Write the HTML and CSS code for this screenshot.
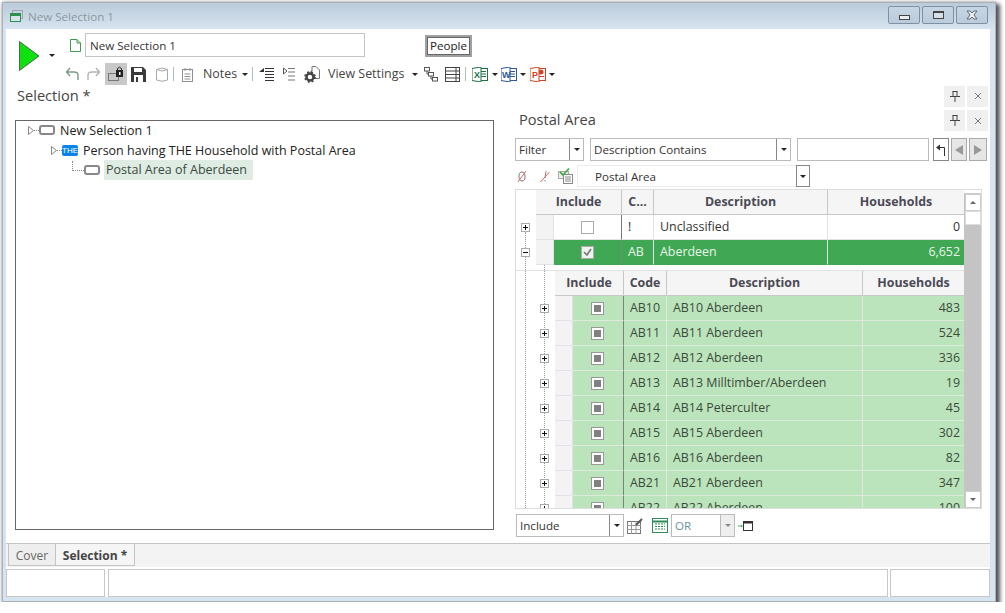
FILE: index.html
```html
<!DOCTYPE html>
<html lang="en">
<head>
    <meta charset="UTF-8">
    <title>New Selection 1</title>
    <link rel="stylesheet" href="styles.css">
</head>
<body>
    <div class="ventana">
        <div class="titulo">
            <svg class="titulo-icono" width="13" height="12" viewBox="0 0 13 12"><rect x="2.5" y="0.5" width="10" height="8" fill="none" stroke="#9aa5ad"/><rect x="0.5" y="3.5" width="10" height="8" fill="#d6e4ea" stroke="#2f8f4e"/><rect x="1" y="4" width="9" height="2" fill="#2f8f4e"/></svg>
            <span class="titulo-texto">New Selection 1</span>
            <div class="ventana-botones">
                <button class="vbtn"><i class="v-min"></i></button>
                <button class="vbtn"><i class="v-max"></i></button>
                <button class="vbtn"><svg width="14" height="10" viewBox="0 0 14 10"><path d="M2 1 L5 1 L7 3 L9 1 L12 1 L9 5 L12 9 L9 9 L7 7 L5 9 L2 9 L5 5 Z" fill="#e8eef4" stroke="#5c6670"/></svg></button>
            </div>
        </div>
        <div class="cliente">
            <div class="superior">
                <svg class="play" width="21" height="30" viewBox="0 0 21 30"><path d="M0.5 0.5 L20 15 L0.5 29.5 Z" fill="#0fe00f" stroke="#4a6a4a"/></svg>
                <i class="caret play-caret"></i>
                <div class="superior-col">
                    <div class="fila-nombre">
                        <svg width="11" height="13" viewBox="0 0 11 13"><path d="M0.5 0.5 H7 L10.5 4 V12.5 H0.5 Z M7 0.5 V4 H10.5" fill="#fff" stroke="#3f9a4a"/></svg>
                        <input class="nombre" type="text" value="New Selection 1">
                        <span class="people">People</span>
                    </div>
                    <div class="fila-tools">
                        <svg class="t-undo" width="14" height="14" viewBox="0 0 14 14"><path d="M13 13 V8 Q13 5 9 5 H2 M5 1 L1.5 5 L5 9" fill="none" stroke="#7d9a86" stroke-width="1.4"/></svg>
                        <svg class="t-redo" width="14" height="14" viewBox="0 0 14 14"><path d="M1 13 V8 Q1 5 5 5 H12 M9 1 L12.5 5 L9 9" fill="none" stroke="#b4b4b4" stroke-width="1.4"/></svg>
                        <span class="t-lock"><svg width="16" height="16" viewBox="0 0 16 16"><rect x="0.5" y="7.5" width="10" height="7" fill="none" stroke="#777"/><rect x="8" y="4" width="7" height="7" fill="#222"/><path d="M9.5 4 V2.5 Q11.5 0 13.5 2.5 V4" fill="none" stroke="#222"/><rect x="11" y="6" width="1.5" height="3" fill="#fff"/></svg></span>
                        <svg class="t-save" width="15" height="15" viewBox="0 0 15 15"><path d="M0 0 H12 L15 3 V15 H0 Z" fill="#3a3a3a"/><rect x="3" y="1" width="8" height="4" fill="#fff"/><rect x="3" y="8" width="9" height="7" fill="#fff"/><rect x="5" y="10" width="2" height="5" fill="#3a3a3a"/></svg>
                        <svg class="t-cil" width="12" height="15" viewBox="0 0 12 15"><path d="M0.5 2.5 Q6 -0.5 11.5 2.5 V13 Q6 15.5 0.5 13 Z M0.5 2.5 Q6 5.5 11.5 2.5" fill="#fff" stroke="#a8a8a8"/></svg>
                        <i class="sep t-sep1"></i>
                        <svg class="t-nota" width="11" height="15" viewBox="0 0 11 15"><rect x="0.5" y="2.5" width="10" height="12" fill="#fff" stroke="#909090"/><path d="M3 1 V4 M8 1 V4 M2.5 7 H8.5 M2.5 9.5 H8.5 M2.5 12 H8.5" stroke="#909090" fill="none"/></svg>
                        <span class="t-texto t-notes">Notes</span>
                        <i class="caret t-c1"></i>
                        <i class="sep t-sep2"></i>
                        <svg class="t-ind" width="15" height="14" viewBox="0 0 15 14"><path d="M0 5 L5 1 V5 Z" fill="#333"/><path d="M6 1.5 H15 M6 4.5 H15 M6 7.5 H15 M6 10.5 H15 M6 13.5 H15" stroke="#333"/></svg>
                        <svg class="t-ded" width="12" height="14" viewBox="0 0 12 14"><path d="M0.5 1 L4 4 L0.5 7 Z" fill="#fff" stroke="#555"/><path d="M5 1.5 H12 M5 5 H12 M5 9 H12 M5 13 H12" stroke="#777"/></svg>
                        <svg class="t-gear" width="16" height="17" viewBox="0 0 16 17"><path d="M8 0.5 H12 L15.5 4 V12.5 H10 V9 H7 V5 H8 Z" fill="#fff" stroke="#777"/><circle cx="6" cy="11" r="3.5" fill="none" stroke="#444" stroke-width="2.4"/><circle cx="6" cy="11" r="5" fill="none" stroke="#444" stroke-width="1.6" stroke-dasharray="2 2"/></svg>
                        <span class="t-texto t-view">View Settings</span>
                        <i class="caret t-c2"></i>
                        <svg class="t-jer" width="14" height="15" viewBox="0 0 14 15"><rect x="0.5" y="0.5" width="5" height="3.5" fill="#fff" stroke="#555"/><rect x="4.5" y="5.5" width="5" height="3.5" fill="#fff" stroke="#555"/><rect x="8.5" y="10.5" width="5" height="3.5" fill="#fff" stroke="#555"/><path d="M3 4 V7 H4.5 M7 9 V12 H8.5" fill="none" stroke="#555"/></svg>
                        <svg class="t-tab" width="15" height="15" viewBox="0 0 15 15"><rect x="0.5" y="0.5" width="14" height="14" fill="#fff" stroke="#444"/><path d="M0 4 H15 M0 7.5 H15 M0 11 H15 M11 0 V15" stroke="#444"/></svg>
                        <i class="sep t-sep3"></i>
                        <svg class="t-xl" width="16" height="15" viewBox="0 0 16 15"><rect x="6.5" y="1.5" width="9" height="12" fill="#fff" stroke="#1e7145"/><path d="M9 4.5 H14 M9 7 H14 M9 9.5 H14" stroke="#1e7145"/><path d="M0 1.5 L9 0 V15 L0 13.5 Z" fill="#fff" stroke="#1e7145"/><text x="2" y="11" class="ico-letra" fill="#1e7145">X</text></svg>
                        <i class="caret t-c3"></i>
                        <svg class="t-wd" width="16" height="15" viewBox="0 0 16 15"><rect x="6.5" y="1.5" width="9" height="12" fill="#fff" stroke="#2b579a"/><path d="M9 4.5 H14 M9 7 H14 M9 9.5 H14" stroke="#2b579a"/><path d="M0 1.5 L9 0 V15 L0 13.5 Z" fill="#fff" stroke="#2b579a"/><text x="1" y="11" class="ico-letra" fill="#2b579a">W</text></svg>
                        <i class="caret t-c4"></i>
                        <svg class="t-pp" width="16" height="15" viewBox="0 0 16 15"><rect x="6.5" y="1.5" width="9" height="12" fill="#fff" stroke="#d04423"/><circle cx="11" cy="5" r="2.5" fill="#d04423"/><path d="M9 9.5 H14" stroke="#d04423"/><path d="M0 1.5 L9 0 V15 L0 13.5 Z" fill="#fff" stroke="#d04423"/><text x="2" y="11" class="ico-letra" fill="#d04423">P</text></svg>
                        <i class="caret t-c5"></i>
                    </div>
                </div>
            </div>

            <div class="seccion">
                <span class="seccion-titulo">Selection *</span>
                <div class="pines">
                    <span class="pin pin-gris"><svg width="10" height="11" viewBox="0 0 10 11"><path d="M2.5 0.5 H7.5 M3 0.5 V5 M7 0.5 V5 M0 5.5 H10 M5 5.5 V11" stroke="#444" fill="none"/></svg></span>
                    <span class="pin pin-gris"><svg width="8" height="8" viewBox="0 0 8 8"><path d="M1 1 L7 7 M7 1 L1 7" stroke="#777"/></svg></span>
                </div>
            </div>

            <div class="paneles">
                <div class="arbol">
                    <div class="nodo nodo-1">
                        <svg class="flecha" width="6" height="9" viewBox="0 0 6 9"><path d="M0.5 0.5 L5.5 4.5 L0.5 8.5 Z" fill="#fff" stroke="#888"/></svg><i class="guion"></i><i class="caja"></i>
                        <span class="nodo-texto">New Selection 1</span>
                    </div>
                    <div class="nodo nodo-2">
                        <svg class="flecha" width="6" height="9" viewBox="0 0 6 9"><path d="M0.5 0.5 L5.5 4.5 L0.5 8.5 Z" fill="#fff" stroke="#888"/></svg><i class="guion"></i><span class="the">THE</span>
                        <span class="nodo-texto">Person having THE Household with Postal Area</span>
                    </div>
                    <div class="nodo nodo-3">
                        <i class="esquina"></i><i class="caja"></i>
                        <span class="nodo-texto nodo-sel">Postal Area of Aberdeen</span>
                    </div>
                </div>

                <div class="derecha">
                    <div class="derecha-cab">
                        <span class="seccion-titulo">Postal Area</span>
                        <div class="pines">
                            <span class="pin pin-gris"><svg width="10" height="11" viewBox="0 0 10 11"><path d="M2.5 0.5 H7.5 M3 0.5 V5 M7 0.5 V5 M0 5.5 H10 M5 5.5 V11" stroke="#444" fill="none"/></svg></span>
                            <span class="pin"><svg width="8" height="8" viewBox="0 0 8 8"><path d="M1 1 L7 7 M7 1 L1 7" stroke="#777"/></svg></span>
                        </div>
                    </div>

                    <div class="filtros">
                        <div class="combo combo-filter"><span class="combo-texto">Filter</span><span class="drop"><i class="caret"></i></span></div>
                        <div class="combo combo-desc"><span class="combo-texto">Description Contains</span><span class="drop"><i class="caret"></i></span></div>
                        <div class="campo"></div>
                        <span class="nav nav-back"><svg width="10" height="12" viewBox="0 0 10 12"><path d="M0 3.5 L4 0.5 V6.5 Z" fill="#333"/><path d="M3 3.5 H8.5 V12" fill="none" stroke="#333"/></svg></span>
                        <span class="nav nav-gris"><i class="tri-izq"></i></span>
                        <span class="nav nav-gris nav-ult"><i class="tri-der"></i></span>
                    </div>

                    <div class="filtros-2">
                        <svg class="f-cero" width="10" height="13" viewBox="0 0 10 13"><ellipse cx="5" cy="6.5" rx="3" ry="4.5" fill="none" stroke="#777"/><path d="M1 12 L9 1" stroke="#e06060"/></svg>
                        <svg class="f-excl" width="10" height="13" viewBox="0 0 10 13"><path d="M6 1 L5 8 M5 10 V11.5" stroke="#888" fill="none"/><path d="M0.5 12 L9.5 2" stroke="#e06060"/></svg>
                        <svg class="f-lista" width="15" height="16" viewBox="0 0 15 16"><rect x="0.5" y="3.5" width="10" height="7" fill="#eee" stroke="#aaa"/><rect x="5.5" y="6.5" width="9" height="9" fill="#fff" stroke="#888"/><path d="M7 9 H13 M7 11 H13 M7 13 H13" stroke="#888"/><path d="M2 4 L5 7 L11 0.5" fill="none" stroke="#4caf50" stroke-width="1.8"/></svg>
                        <div class="combo combo-area"><span class="combo-texto">Postal Area</span><span class="drop"><i class="caret"></i></span></div>
                    </div>

                    <div class="rejilla">
                        <div class="rejilla-cuerpo">
                            <table class="tabla tabla-padre">
                                <colgroup><col class="c20"><col class="c18"><col class="c68"><col class="c32"><col class="c174"><col class="c137"></colgroup>
                                <tr>
                                    <th class="hueco"></th><th colspan="2">Include</th><th>C...</th><th>Description</th><th>Households</th>
                                </tr>
                                <tr>
                                    <td class="hueco"><i class="mas"></i></td><td class="ind"></td><td class="chk"><i class="check"></i></td><td class="cod">!</td><td>Unclassified</td><td class="num">0</td>
                                </tr>
                                <tr class="fila-activa">
                                    <td class="hueco"><i class="mas menos"></i></td><td class="ind"></td><td class="chk"><i class="check marcado"></i></td><td class="cod">AB</td><td>Aberdeen</td><td class="num">6,652</td>
                                </tr>
                            </table>
                            <table class="tabla tabla-hija">
                                <colgroup><col class="c39"><col class="c18"><col class="c51"><col class="c43"><col class="c196"><col class="c102"></colgroup>
                                <tr>
                                    <th class="hueco"></th><th colspan="2">Include</th><th>Code</th><th>Description</th><th>Households</th>
                                </tr>
                                <tr><td class="hueco"><i class="mas"></i></td><td class="ind"></td><td class="chk"><i class="check medio"></i></td><td class="cod">AB10</td><td>AB10 Aberdeen</td><td class="num">483</td></tr>
                                <tr><td class="hueco"><i class="mas"></i></td><td class="ind"></td><td class="chk"><i class="check medio"></i></td><td class="cod">AB11</td><td>AB11 Aberdeen</td><td class="num">524</td></tr>
                                <tr><td class="hueco"><i class="mas"></i></td><td class="ind"></td><td class="chk"><i class="check medio"></i></td><td class="cod">AB12</td><td>AB12 Aberdeen</td><td class="num">336</td></tr>
                                <tr><td class="hueco"><i class="mas"></i></td><td class="ind"></td><td class="chk"><i class="check medio"></i></td><td class="cod">AB13</td><td>AB13 Milltimber/Aberdeen</td><td class="num">19</td></tr>
                                <tr><td class="hueco"><i class="mas"></i></td><td class="ind"></td><td class="chk"><i class="check medio"></i></td><td class="cod">AB14</td><td>AB14 Peterculter</td><td class="num">45</td></tr>
                                <tr><td class="hueco"><i class="mas"></i></td><td class="ind"></td><td class="chk"><i class="check medio"></i></td><td class="cod">AB15</td><td>AB15 Aberdeen</td><td class="num">302</td></tr>
                                <tr><td class="hueco"><i class="mas"></i></td><td class="ind"></td><td class="chk"><i class="check medio"></i></td><td class="cod">AB16</td><td>AB16 Aberdeen</td><td class="num">82</td></tr>
                                <tr><td class="hueco"><i class="mas"></i></td><td class="ind"></td><td class="chk"><i class="check medio"></i></td><td class="cod">AB21</td><td>AB21 Aberdeen</td><td class="num">347</td></tr>
                                <tr><td class="hueco"><i class="mas"></i></td><td class="ind"></td><td class="chk"><i class="check medio"></i></td><td class="cod">AB22</td><td>AB22 Aberdeen</td><td class="num">100</td></tr>
                            </table>
                        </div>
                        <div class="scroll">
                            <span class="scroll-tope"></span>
                            <span class="scroll-btn"><i class="tri-arr"></i></span>
                            <span class="scroll-thumb"></span>
                            <span class="scroll-pista"></span>
                            <span class="scroll-btn"><i class="tri-abj"></i></span>
                        </div>
                    </div>

                    <div class="pie">
                        <div class="combo combo-include"><span class="combo-texto">Include</span><span class="drop"><i class="caret"></i></span></div>
                        <svg class="p-edit" width="16" height="16" viewBox="0 0 16 16"><rect x="0.5" y="3.5" width="13" height="12" fill="#fff" stroke="#777"/><path d="M0 7.5 H14 M0 11.5 H14 M4.5 3 V16 M9 3 V16" stroke="#999"/><path d="M9 7 L15 1" stroke="#555" stroke-width="2"/></svg>
                        <svg class="p-grid" width="16" height="15" viewBox="0 0 16 15"><rect x="0.5" y="0.5" width="15" height="14" fill="#fff" stroke="#2e8b57"/><path d="M1 3.5 H15" stroke="#2e8b57" stroke-width="2"/><path d="M3 6 H13 M3 8.5 H13 M3 11 H13" stroke="#2e8b57" stroke-dasharray="2 1"/></svg>
                        <div class="combo combo-or"><span class="combo-texto">OR</span><span class="drop drop-off"><i class="caret"></i></span></div>
                        <svg class="p-vent" width="15" height="10" viewBox="0 0 15 10"><path d="M0 5 H3" stroke="#4caf50"/><path d="M3 3.5 L5 5 L3 6.5 Z" fill="#4caf50"/><rect x="5.5" y="0.5" width="9" height="9" fill="#fff" stroke="#333"/><rect x="5" y="0" width="10" height="2.5" fill="#333"/></svg>
                    </div>
                </div>
            </div>

            <div class="pestanas">
                <span class="pestana">Cover</span>
                <span class="pestana pestana-activa">Selection *</span>
            </div>
            <div class="estado">
                <span class="estado-celda e1"></span>
                <span class="estado-celda e2"></span>
                <span class="estado-celda e3"></span>
            </div>
        </div>
    </div>
</body>
</html>
```

FILE: styles.css
```css
* {
    box-sizing: border-box;
}

body {
    margin: 0;
    background: #fff;
    font-family: 'Open Sans', 'Noto Sans', sans-serif;
    font-size: 12px;
    color: #333;
    overflow: hidden;
}

.ventana {
    width: 994px;
    height: 600px;
    margin: 2px 0 0 2px;
    padding: 0 5px 4px 3px;
    background: #d6e4f2;
    border: 1px solid #a9b2ba;
    box-shadow: 3px 3px 4px 1px #555, 0 0 3px #aaa;
    display: flex;
    flex-direction: column;
}

.titulo {
    height: 26px;
    margin: 0 -5px 0 -3px;
    padding: 0 7px 0 7px;
    background: linear-gradient(#bccbd9, #d6e4f2);
    display: flex;
    align-items: center;
}

.titulo-texto {
    margin-left: 5px;
    color: #8c979f;
    font-size: 11.6px;
}

.ventana-botones {
    margin-left: auto;
    display: flex;
    gap: 2px;
    margin-top: -2px;
}

.vbtn {
    width: 32px;
    height: 18px;
    padding: 0;
    background: linear-gradient(#c6d5e3, #bccbdb);
    border: 1px solid #7d90a4;
    border-radius: 2px;
    display: flex;
    align-items: center;
    justify-content: center;
}

.v-min {
    width: 11px;
    height: 5px;
    margin-top: 4px;
    background: #e8eef4;
    border: 1px solid #444;
}

.v-max {
    width: 11px;
    height: 8px;
    background: #d6e0ea;
    border: 1px solid #444;
    border-top-width: 2px;
}

.cliente {
    flex: 1;
    background: #fff;
    display: flex;
    flex-direction: column;
}

.superior {
    height: 57px;
    display: flex;
    flex-shrink: 0;
}

.play {
    margin: 12px 0 0 13px;
}

.caret {
    display: block;
    width: 0;
    height: 0;
    border-left: 3px solid transparent;
    border-right: 3px solid transparent;
    border-top: 3px solid #222;
}

.play-caret {
    margin: 25px 0 0 9px;
}

.superior-col {
    margin-left: 15px;
    display: flex;
    flex-direction: column;
}

.fila-nombre {
    height: 24px;
    margin-top: 4px;
    display: flex;
    align-items: center;
}

.nombre {
    width: 280px;
    height: 24px;
    margin-left: 4px;
    padding: 0 4px;
    border: 1px solid #c4c4c4;
    font-family: inherit;
    font-size: 11.6px;
    color: #333;
    outline: none;
}

.people {
    margin-left: 60px;
    height: 22px;
    padding: 0 3px;
    margin-top: 1px;
    border: 2px solid #a0a0a0;
    outline: 1px solid #666;
    outline-offset: -3px;
    font-size: 11.6px;
    line-height: 18px;
    color: #222;
}

.fila-tools {
    height: 24px;
    margin-top: 5px;
    margin-left: -10px;
    display: flex;
    align-items: center;
}

.t-undo { margin-left: 5px; }
.t-redo { margin-left: 8px; }
.t-lock {
    width: 22px;
    height: 22px;
    margin-left: 4px;
    background: #c8c8c8;
    display: flex;
    align-items: center;
    justify-content: center;
}
.t-save { margin-left: 4px; }
.t-cil { margin-left: 10px; }
.sep {
    display: block;
    width: 1px;
    height: 14px;
    background: #a8c4b0;
}
.t-sep1 { margin-left: 5px; }
.t-nota { margin-left: 8px; }
.t-texto {
    margin-top: -2px;
    font-size: 12.4px;
    color: #444;
}
.t-notes { margin-left: 10px; }
.t-c1 { margin-left: 5px; }
.t-sep2 { margin-left: 4px; }
.t-ind { margin-left: 6px; }
.t-ded { margin-left: 9px; }
.t-gear { margin-left: 9px; }
.t-view { margin-left: 8px; }
.t-c2 { margin-left: 8px; }
.t-jer { margin-left: 6px; }
.t-tab { margin-left: 7px; }
.t-sep3 { margin-left: 5px; }
.t-xl { margin-left: 6px; }
.t-c3 { margin-left: 4px; }
.t-wd { margin-left: 3px; }
.t-c4 { margin-left: 3px; }
.t-pp { margin-left: 4px; }
.t-c5 { margin-left: 3px; }

.ico-letra {
    font-family: 'Liberation Sans', sans-serif;
    font-size: 9px;
    font-weight: bold;
}

.seccion {
    height: 22px;
    padding: 0 2px 0 11px;
    margin-top: -1px;
    display: flex;
    justify-content: space-between;
    align-items: center;
    flex-shrink: 0;
}

.seccion-titulo {
    margin-top: -2px;
    font-size: 14.6px;
    color: #444;
}

.pines {
    display: flex;
    gap: 2px;
}

.pin {
    width: 21px;
    height: 21px;
    background: #f0f0f0;
    display: flex;
    align-items: center;
    justify-content: center;
}

.paneles {
    flex: 1;
    display: flex;
    min-height: 0;
}

.arbol {
    width: 479px;
    height: 410px;
    margin: 13px 0 0 9px;
    border: 1px solid #666;
}

.nodo {
    height: 20px;
    display: flex;
    align-items: center;
    font-size: 12.5px;
    color: #222;
}

.nodo-1 {
    margin-top: -1px;
    padding-left: 12px;
}
.nodo-2 { padding-left: 35px; }
.nodo-3 { padding-left: 56px; }

.guion {
    width: 5px;
    border-top: 1px dotted #888;
}

.caja {
    width: 16px;
    height: 10px;
    background: #fff;
    border: 2px solid #888;
    border-radius: 3px;
}

.the {
    width: 16px;
    height: 11px;
    background: #0a84e8;
    color: #fff;
    font-family: 'Liberation Sans', sans-serif;
    font-size: 8px;
    line-height: 11px;
    text-align: center;
    border-radius: 2px;
}

.esquina {
    width: 12px;
    height: 10px;
    margin-top: -8px;
    border-left: 1px dotted #888;
    border-bottom: 1px dotted #888;
}

.nodo-texto {
    margin-left: 5px;
}

.nodo-sel {
    height: 20px;
    margin-left: 4px;
    padding: 0 6px 0 2px;
    line-height: 20px;
    background: #dfece3;
    color: #3b4a40;
}

.derecha {
    margin-left: 21px;
    width: 473px;
}

.derecha-cab {
    height: 23px;
    margin-top: 2px;
    padding-left: 4px;
    display: flex;
    justify-content: space-between;
    align-items: center;
}

.derecha-cab .seccion-titulo {
    margin-top: -3px;
}

.filtros {
    height: 23px;
    margin-top: 6px;
    display: flex;
}

.combo {
    height: 100%;
    display: flex;
    border: 1px solid #bbb;
    background: #fff;
}

.combo-texto {
    flex: 1;
    padding-left: 3px;
    font-size: 11.6px;
    line-height: 21px;
    color: #333;
}

.drop {
    width: 14px;
    border-left: 1px solid #888;
    display: flex;
    align-items: center;
    justify-content: center;
}

.drop-off {
    background: #eee;
    border-left-color: #bbb;
}

.drop-off .caret {
    border-top-color: #888;
}

.combo-filter { width: 69px; }
.combo-desc { width: 201px; margin-left: 6px; }

.campo {
    width: 132px;
    margin-left: 6px;
    border: 1px solid #bbb;
}

.nav {
    width: 16px;
    margin-left: 2px;
    border: 1px solid #aaa;
    display: flex;
    align-items: center;
    justify-content: center;
}

.nav-back {
    margin-left: 4px;
    border-color: #888;
}

.nav-gris {
    background: #e6e6e6;
}

.nav-ult {
    width: 18px;
}

.tri-izq {
    border-right: 8px solid #999;
    border-top: 5px solid transparent;
    border-bottom: 5px solid transparent;
}

.tri-der {
    border-left: 8px solid #999;
    border-top: 5px solid transparent;
    border-bottom: 5px solid transparent;
}

.filtros-2 {
    height: 22px;
    margin-top: 4px;
    display: flex;
    align-items: center;
}

.f-cero { margin-left: 2px; }
.f-excl { margin-left: 13px; }
.f-lista { margin-left: 8px; }

.combo-area {
    width: 233px;
    margin-left: 4px;
    border-color: #ececec;
}

.combo-area .combo-texto {
    padding-left: 17px;
}

.combo-area .drop {
    border: 1px solid #888;
    margin: -1px -1px -1px 0;
}

.rejilla {
    width: 467px;
    height: 320px;
    margin-top: 2px;
    border: 1px solid #ddd;
    display: flex;
    position: relative;
    overflow: hidden;
}

.rejilla-cuerpo {
    width: 449px;
    position: relative;
    overflow: hidden;
}

/* lineas punteadas del arbol */
.rejilla-cuerpo::before,
.rejilla-cuerpo::after {
    content: "";
    position: absolute;
    border-left: 1px dotted #999;
    bottom: 0;
}

.rejilla-cuerpo::before {
    left: 9px;
    top: 42px;
}

.rejilla-cuerpo::after {
    left: 28px;
    top: 75px;
}

.tabla {
    width: 449px;
    table-layout: fixed;
    border-collapse: separate;
    border-spacing: 0;
    font-size: 12.4px;
}

.c20 { width: 20px; }
.c18 { width: 18px; }
.c68 { width: 68px; }
.c32 { width: 32px; }
.c174 { width: 174px; }
.c137 { width: 137px; }
.c39 { width: 39px; }
.c51 { width: 51px; }
.c43 { width: 43px; }
.c196 { width: 196px; }
.c102 { width: 102px; }

.tabla th {
    height: 25px;
    padding: 0 0 2px;
    background: #f5f5f5;
    border-right: 1px solid #c8c8c8;
    border-bottom: 1px solid #c8c8c8;
    font-weight: 700;
    color: #4a4a55;
    text-align: center;
}

.tabla td {
    height: 25px;
    padding: 0 0 2px 6px;
    border-right: 1px solid #e2e2e2;
    border-bottom: 1px solid #e2e2e2;
    color: #333;
    white-space: nowrap;
    overflow: hidden;
}

.tabla th.hueco {
    background: #fff;
    border: none;
}

.tabla td.hueco {
    padding: 0;
    border: none;
    background: transparent;
}

.tabla td.ind {
    background: #f3f3f3;
    padding: 0;
}

.tabla td.chk {
    padding: 0 1px 2px 0;
    text-align: center;
    border-right: 1px solid #777;
}

.tabla td.num {
    padding: 0 5px 2px 0;
    text-align: right;
    border-right: none;
}

.tabla-hija {
    margin-top: 5px;
    border-top: 1px solid #e2e2e2;
}

.tabla-hija td {
    background: #bce4bc;
    border-color: #dcebdc;
    color: #3a4a3a;
}

.tabla-hija td.chk {
    border-right-color: #778877;
}

.fila-activa td {
    background: #40a855;
    color: #e8f5ea;
    border-bottom-color: #40a855;
}

.fila-activa td.chk {
    border-right-color: #6f8f78;
}

.tabla-padre td.ind,
.fila-activa td.ind,
.tabla-hija td.ind {
    background: #f3f3f3;
    border-color: #e2e2e2;
}

.check {
    display: inline-block;
    width: 13px;
    height: 13px;
    vertical-align: middle;
    background: #fff;
    border: 1px solid #aaa;
}

.marcado {
    background: #eef3ee url("data:image/svg+xml,%3Csvg xmlns='http://www.w3.org/2000/svg' width='11' height='11'%3E%3Cpath d='M2 5 L5 8 L9 2' fill='none' stroke='%23777' stroke-width='1.6'/%3E%3C/svg%3E") center no-repeat;
}

.medio {
    border-color: #999;
    padding: 2px;
    background: linear-gradient(#808080, #808080) content-box, #fff;
}

.mas {
    display: block;
    position: relative;
    width: 9px;
    height: 9px;
    margin-left: 5px;
    background: #fff;
    border: 1px solid #aaa;
    z-index: 1;
}

.tabla-hija .mas {
    margin-left: 24px;
}

.mas::before,
.mas::after {
    content: "";
    position: absolute;
    background: #111;
}

.mas::before {
    left: 1px;
    top: 3px;
    width: 5px;
    height: 1px;
}

.mas::after {
    left: 3px;
    top: 1px;
    width: 1px;
    height: 5px;
}

.menos::after {
    display: none;
}

.scroll {
    width: 17px;
    display: flex;
    flex-direction: column;
    align-items: center;
    background: #c4c4c4;
}

.scroll-tope {
    width: 100%;
    height: 4px;
    background: #fff;
    border-bottom: 1px solid #ccc;
}

.scroll-btn {
    width: 16px;
    height: 17px;
    background: #fff;
    border: 1px solid #ccc;
    display: flex;
    align-items: center;
    justify-content: center;
    flex-shrink: 0;
}

.scroll-thumb {
    width: 16px;
    height: 14px;
    background: #fff;
    border: 1px solid #ddd;
    flex-shrink: 0;
}

.scroll-pista {
    flex: 1;
}

.tri-arr {
    border-left: 3px solid transparent;
    border-right: 3px solid transparent;
    border-bottom: 3px solid #666;
}

.tri-abj {
    border-left: 3px solid transparent;
    border-right: 3px solid transparent;
    border-top: 3px solid #666;
}

.pie {
    height: 23px;
    margin-top: 5px;
    padding-left: 1px;
    display: flex;
    align-items: center;
}

.combo-include { width: 108px; }
.combo-or { width: 64px; margin-left: 3px; }

.combo-or .combo-texto {
    color: #6b93a0;
}

.p-edit { margin-left: 3px; }
.p-grid { margin-left: 9px; }
.p-vent { margin-left: 3px; }

.pestanas {
    height: 24px;
    padding-left: 2px;
    background: #f3f3f3;
    border-top: 1px solid #c4c4c4;
    display: flex;
    align-items: stretch;
    flex-shrink: 0;
}

.pestana {
    width: 48px;
    height: 22px;
    background: #eee;
    border: 1px solid #c4c4c4;
    border-top: none;
    font-size: 12px;
    line-height: 23px;
    text-align: center;
    color: #666;
}

.pestana-activa {
    width: 79px;
    background: #f5f5f5;
    border-left: none;
    font-weight: 700;
    color: #444;
}

.estado {
    height: 28px;
    margin-top: 2px;
    display: flex;
    justify-content: space-between;
    flex-shrink: 0;
}

.estado-celda {
    border: 1px solid #c8c8c8;
    background: #fff;
}

.e1 { width: 99px; }
.e2 { width: 780px; }
.e3 { width: 100px; }
```
